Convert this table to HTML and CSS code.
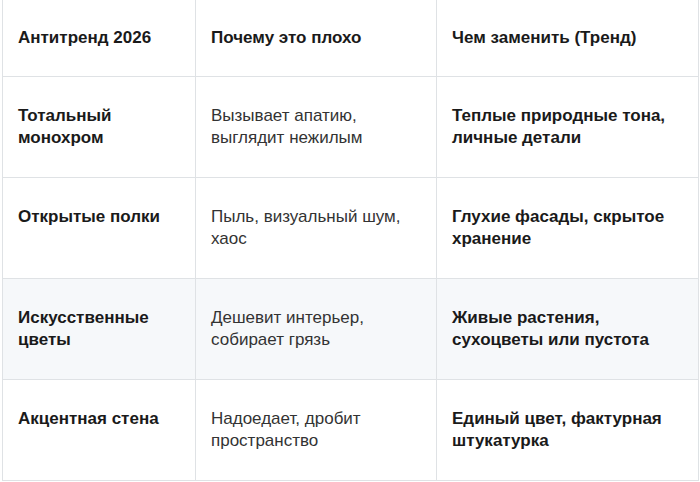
FILE: index.html
```html
<!DOCTYPE html>
<html lang="ru">
<head>
<meta charset="utf-8">
<link rel="stylesheet" href="styles.css">
</head>
<body>
<table class="trends">
  <colgroup>
    <col class="c1"><col class="c2"><col class="c3">
  </colgroup>
  <thead>
    <tr><th>Антитренд 2026</th><th>Почему это плохо</th><th>Чем заменить (Тренд)</th></tr>
  </thead>
  <tbody>
    <tr><td class="b">Тотальный монохром</td><td>Вызывает апатию, выглядит нежилым</td><td class="b">Теплые природные тона, личные детали</td></tr>
    <tr><td class="b">Открытые полки</td><td>Пыль, визуальный шум, хаос</td><td class="b">Глухие фасады, скрытое хранение</td></tr>
    <tr class="alt"><td class="b">Искусственные цветы</td><td>Дешевит интерьер, собирает грязь</td><td class="b">Живые растения, сухоцветы или пустота</td></tr>
    <tr><td class="b">Акцентная стена</td><td>Надоедает, дробит пространство</td><td class="b">Единый цвет, фактурная штукатурка</td></tr>
  </tbody>
</table>
</body>
</html>
```
FILE: styles.css
```css
html, body {
  margin: 0;
  padding: 0;
  background: #ffffff;
}
body {
  font-family: "Liberation Sans", Arial, sans-serif;
  font-size: 17px;
  line-height: 22px;
  color: #333333;
  overflow: hidden;
}
.trends {
  border-collapse: collapse;
  table-layout: fixed;
  width: 696px;
  margin: -1px 0 0 2px;
}
.c1 { width: 193px; }
.c2 { width: 241px; }
.c3 { width: 262px; }
.trends th,
.trends td {
  border: 1px solid #dfe2e5;
  text-align: left;
  vertical-align: top;
  padding: 27px 15px 27px 15px;
}
.trends th {
  font-weight: bold;
  color: #1a1a1a;
}
.trends td {
  padding-top: 28px;
  padding-bottom: 28px;
  height: 44px;
}
.trends td.b {
  font-weight: bold;
  color: #1a1a1a;
}
.trends tr.alt td {
  background: #f6f8fa;
}
```
